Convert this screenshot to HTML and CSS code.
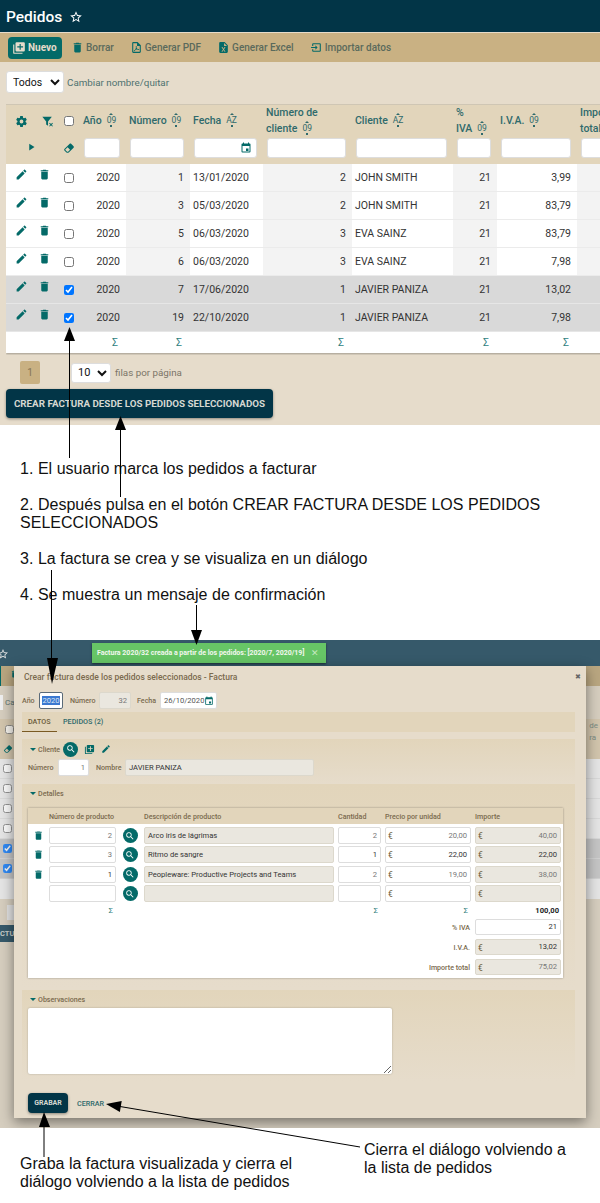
FILE: index.html

```html
<!DOCTYPE html>
<html>
<head>
    <title>Pedidos</title>
    <link rel="stylesheet" href="styles.css">
</head>
<body>
    <svg class="defs">
        <symbol id="i-star" viewBox="0 0 24 24"><path d="M12,15.39L8.24,17.66L9.23,13.38L5.91,10.5L10.29,10.13L12,6.09L13.71,10.13L18.09,10.5L14.77,13.38L15.76,17.66M22,9.24L14.81,8.63L12,2L9.19,8.63L2,9.24L7.45,13.97L5.82,21L12,17.27L18.18,21L16.54,13.97L22,9.24Z"/></symbol>
        <symbol id="i-new" viewBox="0 0 24 24"><path d="M19,11H15V15H13V11H9V9H13V5H15V9H19M20,2H8A2,2 0 0,0 6,4V16A2,2 0 0,0 8,18H20A2,2 0 0,0 22,16V4C22,2.89 21.1,2 20,2M4,6H2V20A2,2 0 0,0 4,22H18V20H4V6Z"/></symbol>
        <symbol id="i-trash" viewBox="0 0 24 24"><path d="M19,4H15.5L14.5,3H9.5L8.5,4H5V6H19M6,19A2,2 0 0,0 8,21H16A2,2 0 0,0 18,19V7H6V19Z"/></symbol>
        <symbol id="i-pdf" viewBox="0 0 24 24"><path d="M14,2L20,8V20A2,2 0 0,1 18,22H6A2,2 0 0,1 4,20V4A2,2 0 0,1 6,2H14M18,20V9H13V4H6V20H18M10.92,12.31C10.68,11.54 10.15,9.08 11.55,9.04C12.95,9 12.03,12.16 12.03,12.16C12.42,13.65 14.05,14.72 14.05,14.72C14.55,14.57 17.4,14.25 17,15.72C16.57,17.19 13.5,15.81 13.5,15.81C11.55,15.95 10.1,16.47 10.1,16.47C8.98,18.56 7.67,19.5 7.14,18.63C6.47,17.5 9.23,16.06 9.23,16.06C10.65,13.73 10.9,12.35 10.92,12.31Z"/></symbol>
        <symbol id="i-excel" viewBox="0 0 24 24"><path d="M14,2H6A2,2 0 0,0 4,4V20A2,2 0 0,0 6,22H18A2,2 0 0,0 20,20V8L14,2M15.8,20H14L12,16.6L10,20H8.2L11.1,15.5L8.2,11H10L12,14.4L14,11H15.8L12.9,15.5L15.8,20M13,9V3.5L18.5,9H13Z"/></symbol>
        <symbol id="i-import" viewBox="0 0 24 24"><path d="M14,12L10,8V11H2V13H10V16M20,18V6C20,4.89 19.1,4 18,4H6A2,2 0 0,0 4,6V9H6V6H18V18H6V15H4V18A2,2 0 0,0 6,20H18A2,2 0 0,0 20,18Z"/></symbol>
        <symbol id="i-cog" viewBox="0 0 24 24"><path d="M12,15.5A3.5,3.5 0 0,1 8.5,12A3.5,3.5 0 0,1 12,8.5A3.5,3.5 0 0,1 15.5,12A3.5,3.5 0 0,1 12,15.5M19.43,12.97C19.47,12.65 19.5,12.33 19.5,12C19.5,11.67 19.47,11.34 19.43,11L21.54,9.37C21.73,9.22 21.78,8.95 21.66,8.73L19.66,5.27C19.54,5.05 19.27,4.96 19.05,5.05L16.56,6.05C16.04,5.66 15.5,5.32 14.87,5.07L14.5,2.42C14.46,2.18 14.25,2 14,2H10C9.75,2 9.54,2.18 9.5,2.42L9.13,5.07C8.5,5.32 7.96,5.66 7.44,6.05L4.95,5.05C4.73,4.96 4.46,5.05 4.34,5.27L2.34,8.73C2.21,8.95 2.27,9.22 2.46,9.37L4.57,11C4.53,11.34 4.5,11.67 4.5,12C4.5,12.33 4.53,12.65 4.57,12.97L2.46,14.63C2.27,14.78 2.21,15.05 2.34,15.27L4.34,18.73C4.46,18.95 4.73,19.03 4.95,18.95L7.44,17.94C7.96,18.34 8.5,18.68 9.13,18.93L9.5,21.58C9.54,21.82 9.75,22 10,22H14C14.25,22 14.46,21.82 14.5,21.58L14.87,18.93C15.5,18.67 16.04,18.34 16.56,17.94L19.05,18.95C19.27,19.03 19.54,18.95 19.66,18.73L21.66,15.27C21.78,15.05 21.73,14.78 21.54,14.63L19.43,12.97Z"/></symbol>
        <symbol id="i-filter" viewBox="0 0 24 24"><path d="M13,12V20L9.5,17.5V12L2.5,3H20Z"/><path d="M15,15.5L16.2,14.3L18.5,16.6L20.8,14.3L22,15.5L19.7,17.8L22,20.1L20.8,21.3L18.5,19L16.2,21.3L15,20.1L17.3,17.8Z"/></symbol>
        <symbol id="i-play" viewBox="0 0 24 24"><path d="M6,3L20,12L6,21Z"/></symbol>
        <symbol id="i-eraser" viewBox="0 0 24 24"><path d="M16.24,3.56L21.19,8.5C21.97,9.29 21.97,10.55 21.19,11.34L12,20.53C10.44,22.09 7.91,22.09 6.34,20.53L2.81,17C2.03,16.21 2.03,14.95 2.81,14.16L13.41,3.56C14.2,2.78 15.46,2.78 16.24,3.56M4.22,15.58L7.76,19.11C8.54,19.9 9.8,19.9 10.59,19.11L14.12,15.58L9.17,10.63L4.22,15.58Z"/></symbol>
        <symbol id="i-calendar" viewBox="0 0 24 24"><path d="M19,19H5V8H19M16,1V3H8V1H6V3H5C3.89,3 3,3.89 3,5V19A2,2 0 0,0 5,21H19A2,2 0 0,0 21,19V5C21,3.89 20.1,3 19,3H18V1M17,13H12V18H17V13Z"/></symbol>
        <symbol id="i-pencil" viewBox="0 0 24 24"><path d="M20.71,7.04C21.1,6.65 21.1,6 20.71,5.63L18.37,3.29C18,2.9 17.35,2.9 16.96,3.29L15.12,5.12L18.87,8.87M3,17.25V21H6.75L17.81,9.93L14.06,6.18L3,17.25Z"/></symbol>
        <symbol id="i-search" viewBox="0 0 24 24"><path d="M9.5,3A6.5,6.5 0 0,1 16,9.5C16,11.11 15.41,12.59 14.44,13.73L14.71,14H15.5L20.5,19L19,20.5L14,15.5V14.71L13.73,14.44C12.59,15.41 11.11,16 9.5,16A6.5,6.5 0 0,1 3,9.5A6.5,6.5 0 0,1 9.5,3M9.5,5C7,5 5,7 5,9.5C5,12 7,14 9.5,14C12,14 14,12 14,9.5C14,7 12,5 9.5,5Z"/></symbol>
    </svg>

    <div class="page">
        <!-- lista de pedidos -->
        <div class="shot1">
            <div class="topbar">
                <span class="topbar-title">Pedidos</span>
                <svg class="ico star"><use href="#i-star"/></svg>
            </div>
            <div class="toolbar">
                <a class="btn-new"><svg class="ico ico-new"><use href="#i-new"/></svg>Nuevo</a>
                <a class="tool tool-borrar"><svg class="ico"><use href="#i-trash"/></svg>Borrar</a>
                <a class="tool"><svg class="ico"><use href="#i-pdf"/></svg>Generar PDF</a>
                <a class="tool"><svg class="ico"><use href="#i-excel"/></svg>Generar Excel</a>
                <a class="tool"><svg class="ico"><use href="#i-import"/></svg>Importar datos</a>
            </div>
            <div class="listbar">
                <select class="sel sel-todos"><option>Todos</option></select>
                <a class="listbar-link">Cambiar nombre/quitar</a>
            </div>
            <div class="grid-wrap">
                <table class="grid">
                    <colgroup>
                        <col class="c-a"><col class="c-b"><col class="c-c"><col class="c-anio"><col class="c-num"><col class="c-fecha"><col class="c-ncli"><col class="c-cli"><col class="c-piva"><col class="c-iva"><col class="c-tot">
                    </colgroup>
                    <thead>
                        <tr class="head-1">
                            <th class="ic"><svg class="ico ico-cog"><use href="#i-cog"/></svg></th>
                            <th class="ic"><svg class="ico ico-cog"><use href="#i-filter"/></svg></th>
                            <th class="ic"><input type="checkbox" class="chk"></th>
                            <th>Año<span class="sort">09</span></th>
                            <th>Número<span class="sort">09</span></th>
                            <th>Fecha<span class="sort">AZ</span></th>
                            <th>Número de<br>cliente<span class="sort">09</span></th>
                            <th>Cliente<span class="sort">AZ</span></th>
                            <th>%<br>IVA<span class="sort">09</span></th>
                            <th>I.V.A.<span class="sort">09</span></th>
                            <th>Importe<br>total<span class="sort">09</span></th>
                        </tr>
                        <tr class="head-2">
                            <th class="ic ic-play"><svg class="ico ico-play"><use href="#i-play"/></svg></th>
                            <th class="ic"></th>
                            <th class="ic"><svg class="ico ico-eraser"><use href="#i-eraser"/></svg></th>
                            <th><input class="filter"></th>
                            <th><input class="filter"></th>
                            <th><span class="filter filter-date"><svg class="ico ico-cal"><use href="#i-calendar"/></svg></span></th>
                            <th><input class="filter"></th>
                            <th><input class="filter"></th>
                            <th><input class="filter"></th>
                            <th><input class="filter"></th>
                            <th><input class="filter"></th>
                        </tr>
                    </thead>
                    <tbody>
                        <tr>
                            <td class="ic"><svg class="ico ico-row"><use href="#i-pencil"/></svg></td>
                            <td class="ic"><svg class="ico ico-row ico-del-row"><use href="#i-trash"/></svg></td>
                            <td class="ic"><input type="checkbox" class="chk"></td>
                            <td class="r">2020</td><td class="r alt">1</td><td>13/01/2020</td><td class="r alt">2</td><td>JOHN SMITH</td><td class="r alt">21</td><td class="r">3,99</td><td class="r alt"></td>
                        </tr>
                        <tr>
                            <td class="ic"><svg class="ico ico-row"><use href="#i-pencil"/></svg></td>
                            <td class="ic"><svg class="ico ico-row ico-del-row"><use href="#i-trash"/></svg></td>
                            <td class="ic"><input type="checkbox" class="chk"></td>
                            <td class="r">2020</td><td class="r alt">3</td><td>05/03/2020</td><td class="r alt">2</td><td>JOHN SMITH</td><td class="r alt">21</td><td class="r">83,79</td><td class="r alt"></td>
                        </tr>
                        <tr>
                            <td class="ic"><svg class="ico ico-row"><use href="#i-pencil"/></svg></td>
                            <td class="ic"><svg class="ico ico-row ico-del-row"><use href="#i-trash"/></svg></td>
                            <td class="ic"><input type="checkbox" class="chk"></td>
                            <td class="r">2020</td><td class="r alt">5</td><td>06/03/2020</td><td class="r alt">3</td><td>EVA SAINZ</td><td class="r alt">21</td><td class="r">83,79</td><td class="r alt"></td>
                        </tr>
                        <tr>
                            <td class="ic"><svg class="ico ico-row"><use href="#i-pencil"/></svg></td>
                            <td class="ic"><svg class="ico ico-row ico-del-row"><use href="#i-trash"/></svg></td>
                            <td class="ic"><input type="checkbox" class="chk"></td>
                            <td class="r">2020</td><td class="r alt">6</td><td>06/03/2020</td><td class="r alt">3</td><td>EVA SAINZ</td><td class="r alt">21</td><td class="r">7,98</td><td class="r alt"></td>
                        </tr>
                        <tr class="sel-row">
                            <td class="ic"><svg class="ico ico-row"><use href="#i-pencil"/></svg></td>
                            <td class="ic"><svg class="ico ico-row ico-del-row"><use href="#i-trash"/></svg></td>
                            <td class="ic"><input type="checkbox" class="chk" checked></td>
                            <td class="r">2020</td><td class="r">7</td><td>17/06/2020</td><td class="r">1</td><td>JAVIER PANIZA</td><td class="r">21</td><td class="r">13,02</td><td class="r"></td>
                        </tr>
                        <tr class="sel-row">
                            <td class="ic"><svg class="ico ico-row"><use href="#i-pencil"/></svg></td>
                            <td class="ic"><svg class="ico ico-row ico-del-row"><use href="#i-trash"/></svg></td>
                            <td class="ic"><input type="checkbox" class="chk" checked></td>
                            <td class="r">2020</td><td class="r">19</td><td>22/10/2020</td><td class="r">1</td><td>JAVIER PANIZA</td><td class="r">21</td><td class="r">7,98</td><td class="r"></td>
                        </tr>
                    </tbody>
                    <tfoot>
                        <tr>
                            <td></td><td></td><td></td>
                            <td class="sum">Σ</td><td class="sum">Σ</td><td></td><td class="sum">Σ</td><td></td><td class="sum">Σ</td><td class="sum">Σ</td><td></td>
                        </tr>
                    </tfoot>
                </table>
            </div>
            <div class="pager">
                <span class="pager-num">1</span>
                <select class="sel sel-rows"><option>10</option></select>
                <span class="pager-text">filas por página</span>
            </div>
            <a class="btn-dark btn-crear">CREAR FACTURA DESDE LOS PEDIDOS SELECCIONADOS</a>
        </div>

        <div class="notes">
            <p>1. El usuario marca los pedidos a facturar</p>
            <p>2. Después pulsa en el botón CREAR FACTURA DESDE LOS PEDIDOS SELECCIONADOS</p>
            <p>3. La factura se crea y se visualiza en un diálogo</p>
            <p>4. Se muestra un mensaje de confirmación</p>
        </div>

        <!-- dialogo -->
        <div class="shot2">
            <div class="behind">
                <div class="behind-top"><svg class="ico behind-star"><use href="#i-star"/></svg></div>
                <div class="behind-bar"><svg class="ico behind-trash"><use href="#i-trash"/></svg></div>
                <div class="behind-list"><span class="behind-sel"></span><span class="behind-link">Ca</span></div>
                <div class="behind-head">
                    <div class="behind-cell"><input type="checkbox" class="mini-chk"></div>
                    <div class="behind-cell"><svg class="ico behind-eraser"><use href="#i-eraser"/></svg></div>
                    <div class="behind-cols">de<br>ra</div>
                </div>
                <div class="behind-row"><input type="checkbox" class="mini-chk"></div>
                <div class="behind-row"><input type="checkbox" class="mini-chk"></div>
                <div class="behind-row"><input type="checkbox" class="mini-chk"></div>
                <div class="behind-row"><input type="checkbox" class="mini-chk"></div>
                <div class="behind-row behind-picked"><input type="checkbox" class="mini-chk" checked></div>
                <div class="behind-row behind-picked"><input type="checkbox" class="mini-chk" checked></div>
                <div class="behind-row behind-foot"></div>
                <div class="behind-pager"></div>
                <div class="behind-btn">CTU</div>
            </div>

            <div class="toast">
                <span>Factura 2020/32 creada a partir de los pedidos: [2020/7, 2020/19]</span>
                <span class="toast-x">✕</span>
            </div>

            <div class="dialog">
                <span class="dialog-x">✖</span>
                <div class="dialog-title">Crear factura desde los pedidos seleccionados - Factura</div>
                <div class="form-row">
                    <label class="lab lab-anio">Año</label><span class="field f-anio"><span class="selected">2020</span></span>
                    <label class="lab lab-num">Número</label><span class="field f-num ro">32</span>
                    <label class="lab lab-fecha">Fecha</label><span class="field f-fecha">26/10/2020<svg class="ico ico-cal"><use href="#i-calendar"/></svg></span>
                </div>
                <div class="tabs">
                    <span class="tab tab-on">DATOS</span>
                    <span class="tab">PEDIDOS (2)</span>
                </div>

                <div class="group group-cliente">
                    <div class="group-title">
                        <span class="caret"></span>Cliente
                        <span class="circle circle-title"><svg class="ico"><use href="#i-search"/></svg></span>
                        <svg class="ico ico-t1"><use href="#i-new"/></svg>
                        <svg class="ico ico-t2"><use href="#i-pencil"/></svg>
                    </div>
                    <div class="form-row form-cliente">
                        <label class="lab lab-cnum">Número</label><span class="field f-cnum">1</span>
                        <label class="lab lab-nombre">Nombre</label><span class="field f-cnom ro left">JAVIER PANIZA</span>
                    </div>
                </div>

                <div class="group group-det">
                    <div class="group-title"><span class="caret"></span>Detalles</div>
                    <div class="card">
                        <div class="card-head">
                            <span></span>
                            <span>Número de producto</span>
                            <span></span>
                            <span>Descripción de producto</span>
                            <span>Cantidad</span>
                            <span>Precio por unidad</span>
                            <span>Importe</span>
                        </div>
                        <div class="line">
                            <svg class="ico ico-del"><use href="#i-trash"/></svg>
                            <span class="field grey">2</span>
                            <span class="circle"><svg class="ico"><use href="#i-search"/></svg></span>
                            <span class="field ro left">Arco iris de lágrimas</span>
                            <span class="field grey">2</span>
                            <span class="field grey euro">20,00</span>
                            <span class="field ro euro grey">40,00</span>
                        </div>
                        <div class="line">
                            <svg class="ico ico-del"><use href="#i-trash"/></svg>
                            <span class="field grey">3</span>
                            <span class="circle"><svg class="ico"><use href="#i-search"/></svg></span>
                            <span class="field ro left">Ritmo de sangre</span>
                            <span class="field">1</span>
                            <span class="field euro">22,00</span>
                            <span class="field ro euro">22,00</span>
                        </div>
                        <div class="line">
                            <svg class="ico ico-del"><use href="#i-trash"/></svg>
                            <span class="field">1</span>
                            <span class="circle"><svg class="ico"><use href="#i-search"/></svg></span>
                            <span class="field ro left">Peopleware: Productive Projects and Teams</span>
                            <span class="field grey">2</span>
                            <span class="field grey euro">19,00</span>
                            <span class="field ro euro grey">38,00</span>
                        </div>
                        <div class="line">
                            <span></span>
                            <span class="field"></span>
                            <span class="circle"><svg class="ico"><use href="#i-search"/></svg></span>
                            <span class="field ro"></span>
                            <span class="field"></span>
                            <span class="field euro"></span>
                            <span class="field ro euro"></span>
                        </div>
                        <div class="line line-sum">
                            <span></span>
                            <span class="sum">Σ</span>
                            <span></span>
                            <span></span>
                            <span class="sum">Σ</span>
                            <span class="sum">Σ</span>
                            <b class="total">100,00</b>
                        </div>
                        <div class="line line-tot">
                            <label class="tot-lab">% IVA</label>
                            <span class="field">21</span>
                        </div>
                        <div class="line line-tot">
                            <label class="tot-lab">I.V.A.</label>
                            <span class="field ro euro">13,02</span>
                        </div>
                        <div class="line line-tot">
                            <label class="tot-lab">Importe total</label>
                            <span class="field ro euro grey">75,02</span>
                        </div>
                    </div>
                </div>

                <div class="group group-obs">
                    <div class="group-title"><span class="caret"></span>Observaciones</div>
                    <textarea class="obs"></textarea>
                </div>

                <div class="dialog-btns">
                    <a class="btn-dark btn-grabar">GRABAR</a>
                    <a class="btn-cerrar">CERRAR</a>
                </div>
            </div>
        </div>

        <div class="notes2">
            <p class="note-left">Graba la factura visualizada y cierra el diálogo volviendo a la lista de pedidos</p>
            <p class="note-right">Cierra el diálogo volviendo a la lista de pedidos</p>
        </div>

        <!-- flechas -->
        <svg class="arrows" viewBox="0 0 600 1203">
            <path d="M69.5 340V458M120.5 428V497M51.5 570V660M196.5 605V632M44 1125V1157M120 1106.5L360 1147" stroke="#000" stroke-width="1" fill="none"/>
            <path d="M69.5 327L75 341H64Z"/>
            <path d="M120.5 416L126 430H115Z"/>
            <path d="M52 684L58 658H47Z"/>
            <path d="M196.5 645L202 630H191Z"/>
            <path d="M44 1112L50 1127H39Z"/>
            <path d="M106 1104L121.7 1101.1L119.9 1111.9Z"/>
        </svg>
    </div>
</body>
</html>
```

FILE: styles.css

```css
html, body {
    margin: 0;
    padding: 0;
    background-color: #fff;
}
.defs {
    display: none;
}
.page {
    position: relative;
    width: 600px;
    height: 1203px;
    overflow: hidden;
    font-family: 'Roboto', 'Liberation Sans', sans-serif;
    font-size: 11px;
    color: #333;
}
.ico {
    display: inline-block;
    width: 12px;
    height: 12px;
    fill: currentColor;
    flex: none;
}
a {
    text-decoration: none;
}

/* lista de pedidos */
.shot1 {
    height: 425px;
    background-color: #e6dccb;
    overflow: hidden;
}
.topbar {
    display: flex;
    align-items: center;
    height: 32px;
    padding-left: 6px;
    padding-top: 1px;
    box-sizing: border-box;
    background-color: #023547;
    color: #fff;
}
.topbar-title {
    font-size: 15.5px;
    font-weight: 500;
}
.star {
    width: 14px;
    height: 14px;
    margin-left: 7px;
}
.toolbar {
    display: flex;
    align-items: center;
    height: 29px;
    margin-top: 1px;
    padding-left: 8px;
    background-color: #c9b183;
}
.btn-new {
    display: flex;
    align-items: center;
    box-sizing: border-box;
    width: 54px;
    height: 22px;
    padding-left: 4px;
    border-radius: 4px;
    background-color: #046a68;
    color: #e6dccb;
    font-weight: 700;
    font-size: 10px;
}
.ico-new {
    width: 14px;
    height: 14px;
    margin-right: 2px;
}
.tool {
    display: flex;
    align-items: center;
    margin-left: 16px;
    color: #5a6a5c;
    font-weight: 500;
    font-size: 10px;
}
.tool .ico {
    margin-right: 2px;
    color: #046a68;
    width: 13px;
    height: 13px;
}
.tool-borrar {
    margin-left: 9px;
}
.listbar {
    display: flex;
    align-items: center;
    height: 22px;
    margin-top: 9px;
    padding-left: 6px;
}
.sel {
    font-family: 'Roboto', sans-serif;
    font-size: 11px;
    color: #111;
    background-color: #fff;
    border: 1px solid #ddd;
    border-radius: 3px;
}
.sel-todos {
    width: 58px;
    height: 22px;
    padding-left: 2px;
    font-size: 10.5px;
}
.listbar-link {
    margin-left: 3px;
    color: #4e7270;
    font-size: 9.8px;
}
.grid-wrap {
    margin: 11px 0 0 6px;
    overflow: hidden;
    border-top: 1px solid #cfc6b4;
    padding-bottom: 2px;
}
.grid {
    width: 661px;
    table-layout: fixed;
    border-collapse: collapse;
    background-color: #fff;
    box-shadow: 0 1px 2px rgba(0, 0, 0, 0.3);
}
.c-a { width: 30px; }
.c-b { width: 22px; }
.c-c { width: 22px; }
.c-anio { width: 46px; }
.c-num { width: 64px; }
.c-fecha { width: 73px; }
.c-ncli { width: 89px; }
.c-cli { width: 101px; }
.c-piva { width: 44px; }
.c-iva { width: 80px; }
.c-tot { width: 90px; }
.grid th {
    padding: 0 3px;
    background-color: #e2d5bb;
    color: #2f6a6c;
    font-weight: 500;
    font-size: 10.5px;
    line-height: 16px;
    text-align: left;
    overflow: hidden;
}
.head-1 th {
    height: 32px;
}
.head-2 th {
    height: 27px;
    padding: 0 6px 0 4px;
    vertical-align: top;
}
.grid .ic {
    padding: 0;
    text-align: center;
    color: #046a68;
}
.grid .ic-play {
    text-align: right;
}
.ico-cog {
    width: 13px;
    height: 13px;
    vertical-align: middle;
}
.ico-play {
    width: 9px;
    height: 10px;
    margin-top: 5px;
}
.ico-eraser {
    width: 12px;
    height: 12px;
    margin-top: 5px;
}
.sort {
    display: inline-block;
    position: relative;
    top: -1px;
    margin-left: 5px;
    font-size: 8.5px;
    font-weight: 400;
    line-height: 9px;
}
.sort::before {
    content: "";
    position: absolute;
    left: 50%;
    top: -3px;
    margin-left: -2px;
    border-left: 2px solid transparent;
    border-right: 2px solid transparent;
    border-bottom: 2px solid #2f6a6c;
}
.sort::after {
    content: "";
    position: absolute;
    left: 50%;
    bottom: -2px;
    margin-left: -1px;
    width: 2px;
    height: 2px;
    background-color: #2f6a6c;
}
.filter {
    display: block;
    width: 100%;
    height: 20px;
    margin-top: 1px;
    padding: 0;
    box-sizing: border-box;
    background-color: #fff;
    border: 1px solid #ddd;
    border-radius: 3px;
}
.filter-date {
    display: flex;
    align-items: center;
    justify-content: flex-end;
    padding-right: 4px;
    color: #046a68;
}
.grid td {
    height: 27px;
    padding: 0 3px;
    border-bottom: 1px solid #ebebeb;
    font-size: 10.5px;
    color: #333;
}
.grid .r {
    padding-right: 6px;
    text-align: right;
}
.grid .alt {
    background-color: #f3f3f3;
}
.ico-row {
    width: 13px;
    height: 13px;
    position: relative;
    top: -2px;
}
.ico-del-row {
    left: -3px;
}
.chk {
    display: inline-block;
    width: 10px;
    height: 10px;
    margin: 0;
    vertical-align: middle;
}
.sel-row td {
    background-color: #d9d9d9;
    border-bottom-color: #e6e6e6;
}
.grid tfoot td {
    height: 21px;
    border-bottom: 0;
}
.grid .sum,
.sum {
    padding-right: 8px;
    text-align: right;
    color: #2f7f80;
    font-size: 10.5px;
}
.pager {
    display: flex;
    align-items: center;
    height: 23px;
    margin-top: 6px;
    padding-left: 20px;
}
.pager-num {
    display: block;
    width: 20px;
    height: 23px;
    line-height: 23px;
    text-align: center;
    border-radius: 2px;
    background-color: #c9b183;
    color: #857455;
    font-size: 10px;
}
.sel-rows {
    width: 40px;
    height: 20px;
    margin-left: 31px;
    padding-left: 2px;
}
.pager-text {
    margin-left: 4px;
    color: #7b7568;
    font-size: 9.8px;
}
.btn-dark {
    display: block;
    box-sizing: border-box;
    border-radius: 4px;
    background-color: #023547;
    color: #d5d8d2;
    font-weight: 700;
    text-align: center;
    box-shadow: 0 1px 3px rgba(0, 0, 0, 0.4);
}
.btn-crear {
    width: 267px;
    height: 29px;
    margin: 5px 0 0 6px;
    line-height: 29px;
    font-size: 9.8px;
}

/* notas */
.notes {
    height: 215px;
    box-sizing: border-box;
    padding: 35px 55px 0 20px;
    font-family: 'Liberation Sans', Arial, sans-serif;
    font-size: 16px;
    letter-spacing: 0.03px;
    line-height: 18px;
    color: #111;
}
.notes p {
    margin: 0 0 18px;
}

/* dialogo */
.shot2 {
    position: relative;
    height: 488px;
    overflow: hidden;
    background-color: #d5cdbe;
}
.behind-top {
    height: 26px;
    background-color: #36596a;
    color: #e6e6e6;
}
.behind-star {
    width: 12px;
    height: 12px;
    margin: 8px 0 0 -3px;
}
.behind-bar {
    height: 20px;
    background-color: #b9a680;
    color: #046a68;
    border-left: 1px solid #046a68;
}
.behind-trash {
    width: 9px;
    height: 12px;
    margin: 2px 0 0 9px;
}
.behind-list {
    display: flex;
    align-items: center;
    height: 22px;
    margin-top: 5px;
    color: #5a7270;
    font-size: 8px;
}
.behind-sel {
    width: 3px;
    height: 15px;
    background-color: #eee;
}
.behind-link {
    margin-left: 2px;
}
.behind-head {
    position: relative;
    height: 40px;
    margin-top: 6px;
    background-color: #d1c4ac;
    color: #7c8c84;
}
.behind-cell {
    height: 20px;
    padding-left: 3px;
    display: flex;
    align-items: center;
}
.behind-eraser {
    width: 10px;
    height: 10px;
    color: #046a68;
}
.behind-cols {
    position: absolute;
    top: 0;
    right: 2px;
    font-size: 8px;
    line-height: 12px;
    padding-top: 1px;
}
.behind-row {
    display: flex;
    align-items: center;
    height: 20px;
    box-sizing: border-box;
    padding-left: 1px;
    background-color: #e4e4e4;
    border-bottom: 1px solid #d8d8d8;
}
.behind-picked {
    background-color: #c4c4c4;
    border-bottom-color: #d0d0d0;
}
.behind-foot {
    border-bottom: 0;
}
.mini-chk {
    width: 9px;
    height: 9px;
    margin: 0 0 0 2px;
    opacity: 0.75;
}
.behind-pager {
    width: 20px;
    height: 15px;
    margin: 6px 0 0 7px;
    background-color: #e0e0e0;
}
.behind-btn {
    width: 14px;
    height: 17px;
    margin-top: 5px;
    overflow: hidden;
    background-color: #36596a;
    color: #c8ccc8;
    font-weight: 700;
    font-size: 7.5px;
    line-height: 17px;
}
.toast {
    position: absolute;
    left: 92px;
    top: 3px;
    width: 234px;
    height: 20px;
    box-sizing: border-box;
    display: flex;
    align-items: center;
    padding-left: 5px;
    background-color: #67c566;
    color: #f2f7ee;
    font-size: 7px;
    font-weight: 700;
    white-space: nowrap;
    box-shadow: 0 1px 2px rgba(0, 0, 0, 0.5);
}
.toast-x {
    margin-left: 7px;
    font-size: 9px;
    font-weight: 400;
    color: #c5e8c0;
}
.dialog {
    position: absolute;
    left: 14px;
    top: 26px;
    width: 572px;
    height: 452px;
    box-sizing: border-box;
    padding: 0 11px 0 8px;
    background-color: #e6dccb;
    box-shadow: 0 4px 12px rgba(0, 0, 0, 0.45);
    font-size: 7px;
    color: #7a6a4e;
}
.dialog-x {
    position: absolute;
    right: 5px;
    top: 7px;
    font-size: 7px;
    color: #666;
}
.dialog-title {
    height: 26px;
    padding: 4px 0 0 2px;
    box-sizing: border-box;
    font-size: 8.5px;
    font-weight: 500;
    line-height: 14px;
    color: #7a6a4e;
}
.form-row {
    display: flex;
    align-items: center;
    height: 17px;
}
.lab {
    font-weight: 500;
    font-size: 7.1px;
    color: #7a6a4e;
}
.field {
    display: block;
    box-sizing: border-box;
    height: 17px;
    padding: 0 3px;
    border: 1px solid #ddd;
    border-radius: 2px;
    background-color: #fff;
    color: #333;
    font-size: 7.6px;
    line-height: 15px;
    text-align: right;
    white-space: nowrap;
    overflow: hidden;
}
.field.ro {
    background-color: #eae7df;
    border-color: #dcd8cc;
}
.field.left {
    text-align: left;
}
.field.grey {
    color: #777;
}
.field.euro {
    position: relative;
}
.field.euro::before {
    content: "€";
    position: absolute;
    left: 2px;
    top: 1px;
    color: #6b5b3a;
    font-size: 8.5px;
}
.lab-anio {
    width: 17px;
}
.f-anio {
    width: 24px;
    padding: 0 1px;
    border: 1px solid #5a6a78;
    text-align: center;
}
.selected {
    background-color: #3b78d0;
    color: #dfe9f5;
}
.lab-num {
    width: 29px;
    margin-left: 7px;
}
.f-num {
    width: 32px;
    color: #777;
}
.lab-fecha {
    width: 23px;
    margin-left: 6px;
}
.f-fecha {
    display: flex;
    align-items: center;
    justify-content: space-between;
    width: 57px;
    padding: 0 2px 0 3px;
    color: #555;
}
.f-fecha .ico {
    width: 10px;
    height: 10px;
    color: #046a68;
}
.tabs {
    display: flex;
    height: 20px;
    margin-top: 3px;
    background-color: #e2d5bb;
}
.tab {
    padding: 0 6px;
    line-height: 19px;
    font-weight: 500;
    font-size: 7.2px;
    color: #2f6a6c;
}
.tab-on {
    width: 23px;
    color: #6b5b3a;
    border-bottom: 1px solid #7a5a24;
}
.group {
    background: linear-gradient(#e2d5bb, #e6dccb);
}
.group-title {
    display: flex;
    align-items: center;
    height: 20px;
    padding-left: 8px;
    font-weight: 500;
    font-size: 7.1px;
    color: #7a6a4e;
}
.caret {
    width: 0;
    height: 0;
    margin-right: 2px;
    border-left: 3px solid transparent;
    border-right: 3px solid transparent;
    border-top: 3px solid #046a68;
}
.group-cliente {
    height: 45px;
    margin-top: 7px;
}
.circle {
    display: flex;
    align-items: center;
    justify-content: center;
    justify-self: center;
    width: 15px;
    height: 15px;
    border-radius: 50%;
    background-color: #046a68;
    color: #fff;
}
.circle .ico {
    width: 10px;
    height: 10px;
}
.circle-title {
    margin-left: 3px;
}
.ico-t1 {
    width: 11px;
    height: 11px;
    margin-left: 6px;
    color: #046a68;
}
.ico-t2 {
    width: 10px;
    height: 10px;
    margin-left: 6px;
    color: #046a68;
}
.form-cliente {
    padding-left: 6px;
}
.lab-cnum {
    width: 30px;
}
.f-cnum {
    width: 31px;
    color: #777;
}
.lab-nombre {
    width: 29px;
    margin-left: 7px;
}
.f-cnom {
    width: 189px;
    padding-left: 3px;
}
.group-det {
    height: 205px;
}
.group-det .group-title {
    height: 19px;
}
.card {
    width: 535px;
    height: 170px;
    margin: 5px 0 0 6px;
    background-color: #fff;
    box-shadow: 0 0 2px rgba(0, 0, 0, 0.35);
}
.card-head,
.line {
    display: grid;
    grid-template-columns: 17px 67px 20px 190px 43px 86px 86px;
    column-gap: 4px;
    align-items: center;
}
.card-head {
    height: 16px;
    margin-bottom: 2px;
    background-color: #e2d5bb;
    font-weight: 500;
    font-size: 7.1px;
    color: #7a6a4e;
    white-space: nowrap;
}
.line {
    height: 19.3px;
}
.ico-del {
    justify-self: end;
    width: 11px;
    height: 11px;
    margin-right: 1px;
    color: #046a68;
}
.line-sum {
    height: 14px;
}
.line .sum {
    padding-right: 3px;
    font-size: 8px;
}
.total {
    padding-right: 2px;
    text-align: right;
    color: #222;
    font-size: 7.6px;
}
.line-tot {
    height: 20px;
}
.line-tot .field {
    grid-column: 7;
    height: 16px;
    line-height: 14px;
}
.tot-lab {
    grid-column: 1 / 7;
    text-align: right;
    padding-right: 1px;
    font-weight: 500;
    font-size: 7.1px;
    color: #7a6a4e;
}
.group-obs {
    height: 91px;
    margin-top: 1px;
}
.group-obs .group-title {
    height: 18px;
}
.obs {
    display: block;
    width: 364px;
    height: 66px;
    margin-left: 6px;
    padding: 0;
    box-sizing: border-box;
    border: 0;
    border-radius: 2px;
    background-color: #fff;
    box-shadow: 0 0 2px rgba(0, 0, 0, 0.25);
}
.dialog-btns {
    display: flex;
    align-items: center;
    margin-top: 12px;
    padding-left: 6px;
}
.btn-grabar {
    width: 40px;
    height: 20px;
    line-height: 20px;
    font-size: 7px;
}
.btn-cerrar {
    margin-left: 9px;
    color: #2f6a6c;
    font-weight: 500;
    font-size: 7.2px;
}

/* notas de abajo */
.notes2 {
    display: flex;
    height: 75px;
    font-family: 'Liberation Sans', Arial, sans-serif;
    font-size: 16px;
    line-height: 18px;
    color: #111;
}
.notes2 p {
    margin: 0;
}
.notes2 .note-left {
    width: 296px;
    margin: 27px 0 0 20px;
}
.notes2 .note-right {
    width: 215px;
    margin: 13px 0 0 48px;
}
.arrows {
    position: absolute;
    left: 0;
    top: 0;
    width: 600px;
    height: 1203px;
    pointer-events: none;
}
```
